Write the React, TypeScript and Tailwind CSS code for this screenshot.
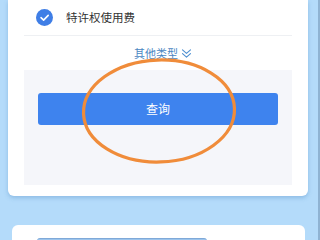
import React from 'react';

const font = { fontFamily: '"Noto Sans CJK SC", "Noto Sans", sans-serif' };

const CheckCircle: React.FC = () => (
    <svg width="17" height="17" viewBox="0 0 17 17" className="shrink-0">
        <circle cx="8.5" cy="8.5" r="8.5" fill="#3f7ee6" />
        <path d="M5 8.7 L7.6 11.1 L12.2 6.4" fill="none" stroke="#fff" strokeWidth="1.6" strokeLinecap="round" strokeLinejoin="round" />
    </svg>
);

const DoubleDown: React.FC = () => (
    <svg width="11" height="11" viewBox="0 0 11 11" className="shrink-0">
        <path d="M1.5 1.8 L5.5 5.4 L9.5 1.8" fill="none" stroke="#4d8fd1" strokeWidth="1.1" strokeLinecap="round" strokeLinejoin="round" />
        <path d="M1.5 5.6 L5.5 9.2 L9.5 5.6" fill="none" stroke="#4d8fd1" strokeWidth="1.1" strokeLinecap="round" strokeLinejoin="round" />
    </svg>
);

const App: React.FC = () => {
    return (
        <div className="relative w-[320px] h-[240px] overflow-hidden bg-[#b4dbfa]" style={font}>
            <div className="flex flex-col">
                {/* first card */}
                <div className="ml-[8px] w-[300px] bg-white rounded-b-[6px] shadow-[0_2px_4px_rgba(70,130,190,0.35)] px-[16px] pb-[11px]">
                    <div className="flex items-center h-[36px] border-b border-[#eef0f3] pl-[12px] gap-[13px]">
                        <CheckCircle />
                        <span className="text-[11.5px] text-[#333]">特许权使用费</span>
                    </div>
                    <div className="flex items-center justify-center h-[34px] gap-[3px] pl-[10px]">
                        <span className="text-[11px] text-[#4a86c2]">其他类型</span>
                        <DoubleDown />
                    </div>
                    <div className="bg-[#f5f6fa] h-[115px] pt-[23px] px-[14px]">
                        <button className="w-full h-[32px] rounded-[3px] bg-[#3e83ee] text-white text-[12px] flex items-center justify-center">
                            查询
                        </button>
                    </div>
                </div>

                {/* second card */}
                <div className="mt-[29px] ml-[12px] w-[293px] h-[40px] bg-white rounded-t-[6px] pt-[13px] pl-[25px]">
                    <div className="w-[170px] h-[6px] rounded-t-[3px] bg-[#9cc4ec] border-t border-[#7fa9d8]" />
                </div>
            </div>

            {/* right scroll edge */}
            <div className="absolute top-0 right-0 w-[2px] h-full bg-[#8fb3d3]" />

            {/* hand-drawn highlight */}
            <svg className="absolute left-0 top-0 pointer-events-none" width="320" height="240">
                <ellipse cx="159" cy="111" rx="75.5" ry="51" fill="none" stroke="#f08c3a" strokeWidth="3.2" transform="rotate(-2 159 111)" />
            </svg>
        </div>
    );
};

export default App;
